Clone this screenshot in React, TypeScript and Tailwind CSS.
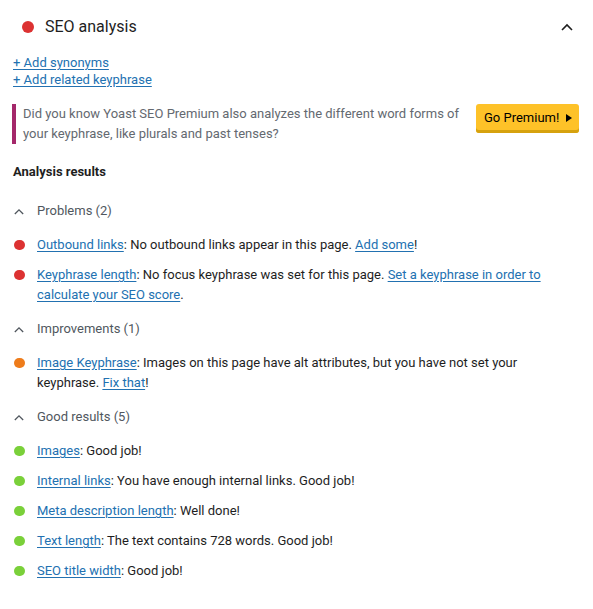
import { ReactNode } from "react";

type Result = {
  color: string;
  label: string;
  body: ReactNode;
};

const Link = ({ children }: { children: ReactNode }) => (
  <a href="#" className="text-[#2271b1] underline underline-offset-[2px]">
    {children}
  </a>
);

const Chevron = ({ className }: { className?: string }) => (
  <svg viewBox="0 0 12 8" className={className} fill="none">
    <path d="M1 7 L6 2 L11 7" stroke="currentColor" strokeWidth="1.6" />
  </svg>
);

const problems: Result[] = [
  {
    color: "bg-[#dc3232]",
    label: "Outbound links",
    body: (
      <>
        : No outbound links appear in this page. <Link>Add some</Link>!
      </>
    ),
  },
  {
    color: "bg-[#dc3232]",
    label: "Keyphrase length",
    body: (
      <>
        : No focus keyphrase was set for this page.{" "}
        <Link>
          Set a keyphrase in order to
          <br />
          calculate your SEO score
        </Link>
        .
      </>
    ),
  },
];

const improvements: Result[] = [
  {
    color: "bg-[#ee7c1b]",
    label: "Image Keyphrase",
    body: (
      <>
        : Images on this page have alt attributes, but you have not set your
        <br />
        keyphrase. <Link>Fix that</Link>!
      </>
    ),
  },
];

const good: Result[] = [
  { color: "bg-[#7ad03a]", label: "Images", body: ": Good job!" },
  {
    color: "bg-[#7ad03a]",
    label: "Internal links",
    body: ": You have enough internal links. Good job!",
  },
  { color: "bg-[#7ad03a]", label: "Meta description length", body: ": Well done!" },
  {
    color: "bg-[#7ad03a]",
    label: "Text length",
    body: ": The text contains 728 words. Good job!",
  },
  { color: "bg-[#7ad03a]", label: "SEO title width", body: ": Good job!" },
];

const ResultGroup = ({ title, items }: { title: string; items: Result[] }) => (
  <div className="flex flex-col">
    <div className="flex items-center h-5 pl-[14px] gap-[13px] text-[#50575e]">
      <Chevron className="w-[10px] h-[7px] text-[#50575e]" />
      <span>{title}</span>
    </div>
    <ul className="mt-[14px] flex flex-col gap-[10px]">
      {items.map((item, i) => (
        <li key={i} className="flex items-start">
          <span className={`mt-[4.5px] ml-[14px] w-[10.5px] h-[10.5px] rounded-full shrink-0 ${item.color}`} />
          <p className="ml-[12.5px] text-[#1e1e1e]">
            <Link>{item.label}</Link>
            {item.body}
          </p>
        </li>
      ))}
    </ul>
  </div>
);

export default function App() {
  return (
    <div
      className="w-[593px] h-[609px] bg-white text-[13px] leading-5 overflow-hidden"
      style={{ fontFamily: "Roboto, 'Liberation Sans', sans-serif" }}
    >
      <div className="h-[53px] flex items-center pl-[22px] pr-[20px]">
        <span className="w-3 h-3 rounded-full bg-[#dc3232]" />
        <span className="ml-[11px] text-[16px] text-[#1e1e1e]">SEO analysis</span>
        <Chevron className="ml-auto w-[12px] h-[8px] text-[#1e1e1e]" />
      </div>

      <div className="px-[13px] flex flex-col leading-[17px] mt-[1px] items-start">
        <Link>+ Add synonyms</Link>
        <Link>+ Add related keyphrase</Link>
      </div>

      <div className="mt-[16px] ml-[12px] mr-[14px] flex items-start justify-between">
        <p className="border-l-4 border-[#a4286a] pl-[7px] text-[#646970]">
          Did you know Yoast SEO Premium also analyzes the different word forms of
          <br />
          your keyphrase, like plurals and past tenses?
        </p>
        <button className="h-[29px] w-[103px] rounded-[3px] bg-[#fec228] shadow-[inset_0_-3px_0_#d6a20f] flex items-center pl-2 pb-[2px] gap-[7px] text-black text-[13px]">
          Go Premium!
          <svg viewBox="0 0 6 8" className="w-[6px] h-[8px]">
            <path d="M0 0 L6 4 L0 8 Z" fill="currentColor" />
          </svg>
        </button>
      </div>

      <h3 className="mt-[18px] px-[13px] font-bold text-[#1e1e1e]">Analysis results</h3>

      <div className="mt-[19px] flex flex-col gap-[14px]">
        <ResultGroup title="Problems (2)" items={problems} />
        <ResultGroup title="Improvements (1)" items={improvements} />
        <ResultGroup title="Good results (5)" items={good} />
      </div>
    </div>
  );
}
